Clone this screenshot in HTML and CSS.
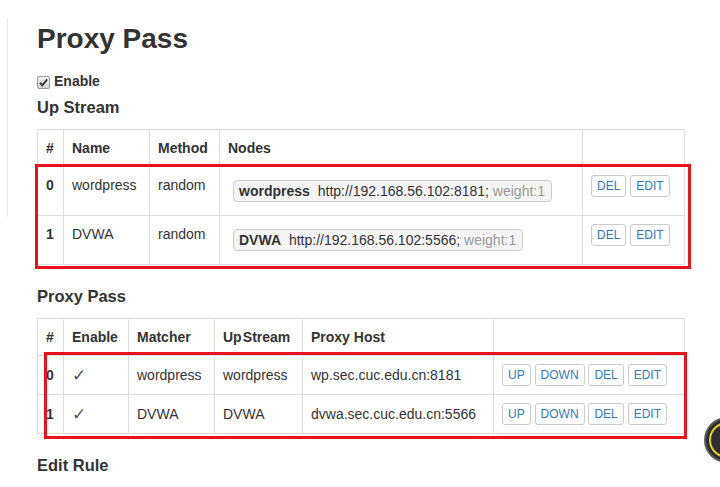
FILE: index.html
```html
<!DOCTYPE html>
<html>
<head>
<meta charset="utf-8">
<link rel="stylesheet" href="styles.css">
</head>
<body>
<div class="page">
  <div class="sidebar"></div>
  <div class="main">
    <h2 class="title">Proxy Pass</h2>
    <div class="checkbox">
      <span class="check"><svg width="11" height="11" viewBox="0 0 11 11"><path d="M2 5.8 L4.3 8.3 L9.2 2.4" fill="none" stroke="#3a3a3a" stroke-width="2"/></svg></span>
      <span class="check-label">Enable</span>
    </div>

    <h4 class="section">Up Stream</h4>
    <div class="table-wrap">
      <table class="grid">
        <colgroup>
          <col class="w26"><col class="w86"><col class="w70"><col class="w363"><col class="w102">
        </colgroup>
        <thead>
          <tr><th>#</th><th>Name</th><th>Method</th><th>Nodes</th><th></th></tr>
        </thead>
        <tbody>
          <tr>
            <td class="num">0</td><td>wordpress</td><td>random</td>
            <td><span class="node"><b>wordpress</b> http://192.168.56.102:8181; <span class="weight">weight:1</span></span></td>
            <td class="actions"><button class="btn">DEL</button> <button class="btn">EDIT</button></td>
          </tr>
          <tr>
            <td class="num">1</td><td>DVWA</td><td>random</td>
            <td><span class="node"><b>DVWA</b> http://192.168.56.102:5566; <span class="weight">weight:1</span></span></td>
            <td class="actions"><button class="btn">DEL</button> <button class="btn">EDIT</button></td>
          </tr>
        </tbody>
      </table>
      <div class="mark mark-1"></div>
    </div>

    <h4 class="section">Proxy Pass</h4>
    <div class="table-wrap">
      <table class="grid">
        <colgroup>
          <col class="w26"><col class="w65"><col class="w86"><col class="w88"><col class="w191"><col class="w191">
        </colgroup>
        <thead>
          <tr><th>#</th><th>Enable</th><th>Matcher</th><th>Up&#8202;Stream</th><th>Proxy Host</th><th></th></tr>
        </thead>
        <tbody>
          <tr class="row-btn">
            <td class="num">0</td><td class="tick">✓</td><td>wordpress</td><td>wordpress</td><td>wp.sec.cuc.edu.cn:8181</td>
            <td class="actions"><button class="btn">UP</button> <button class="btn">DOWN</button> <button class="btn">DEL</button> <button class="btn">EDIT</button></td>
          </tr>
          <tr class="row-btn">
            <td class="num">1</td><td class="tick">✓</td><td>DVWA</td><td>DVWA</td><td>dvwa.sec.cuc.edu.cn:5566</td>
            <td class="actions"><button class="btn">UP</button> <button class="btn">DOWN</button> <button class="btn">DEL</button> <button class="btn">EDIT</button></td>
          </tr>
        </tbody>
      </table>
      <div class="mark mark-2"></div>
    </div>

    <h4 class="section">Edit Rule</h4>
  </div>
</div>
<div class="fab"></div>
</body>
</html>
```
FILE: styles.css
```css
html, body {
  margin: 0;
  padding: 0;
  background: #fff;
  overflow: hidden;
}
body {
  font-family: "Liberation Sans", Arial, sans-serif;
  font-size: 14px;
  line-height: 20px;
  color: #333;
}
.page {
  display: flex;
  align-items: flex-start;
}
.sidebar {
  flex: 0 0 7px;
  height: 199px;
  margin-top: 18px;
  border-right: 1px solid #e8e8e8;
}
.main {
  margin-left: 29px;
  width: 648px;
}
.title {
  font-size: 28px;
  line-height: 31px;
  font-weight: bold;
  margin: 23px 0 17px;
  color: #333;
}
.checkbox {
  display: flex;
  align-items: center;
  height: 20px;
  margin: 0 0 7px;
}
.check {
  width: 11px;
  height: 11px;
  border: 1px solid #9a9a9a;
  border-radius: 2px;
  background: linear-gradient(#f0f0f0, #d8d8d8);
  display: flex;
  margin: 2px 4px 0 0;
}
.check-label {
  font-weight: bold;
}
.section {
  font-size: 16.5px;
  line-height: 18px;
  font-weight: bold;
  margin: 0 0 13px;
  color: #333;
}
.table-wrap {
  position: relative;
  margin-bottom: 22px;
}
.grid {
  width: 648px;
  border-collapse: collapse;
  table-layout: fixed;
}
.w26 { width: 26px; }
.w65 { width: 65px; }
.w70 { width: 70px; }
.w86 { width: 86px; }
.w88 { width: 88px; }
.w102 { width: 102px; }
.w191 { width: 191px; }
.w363 { width: 363px; }
.grid th, .grid td {
  border: 1px solid #ddd;
  padding: 8px;
  text-align: left;
  vertical-align: top;
  white-space: nowrap;
}
.grid th {
  font-weight: bold;
}
.num {
  font-weight: bold;
}
.tick {
  color: #555;
  font-family: "DejaVu Sans", sans-serif;
  font-size: 17px;
  font-weight: 300;
}
.node {
  display: inline-block;
  margin: 5px 0 5px 5px;
  padding: 0 6px 0 5px;
  border: 1px solid #ccc;
  border-radius: 4px;
  background: #f5f5f5;
  line-height: 20px;
}
.node b {
  margin-right: 4px;
}
.weight {
  color: #999;
}
.actions {
  font-size: 14px;
}
.btn {
  display: inline-block;
  font-family: "Liberation Sans", Arial, sans-serif;
  font-size: 12px;
  line-height: 18px;
  padding: 1px 5px;
  border: 1px solid #ccc;
  border-radius: 3px;
  background: #fff;
  color: #337ab7;
  vertical-align: top;
  margin: 0;
}
.row-btn td {
  height: 22px;
  line-height: 22px;
}
.mark {
  position: absolute;
  border: 3px solid #e8121c;
  box-sizing: border-box;
  pointer-events: none;
}
.mark-1 {
  left: -2px;
  top: 35px;
  width: 656px;
  height: 105px;
}
.mark-2 {
  left: 7px;
  top: 34px;
  width: 643px;
  height: 87px;
}
.fab {
  position: absolute;
  left: 704px;
  top: 417px;
  width: 46px;
  height: 46px;
  box-sizing: border-box;
  border-radius: 50%;
  background: #2e2e2e;
  border: 2px solid #5a5a5a;
}
.fab::after {
  content: "";
  position: absolute;
  left: 3px;
  top: 3px;
  right: 3px;
  bottom: 3px;
  border: 2px solid #e0d21a;
  border-radius: 50%;
}
```
